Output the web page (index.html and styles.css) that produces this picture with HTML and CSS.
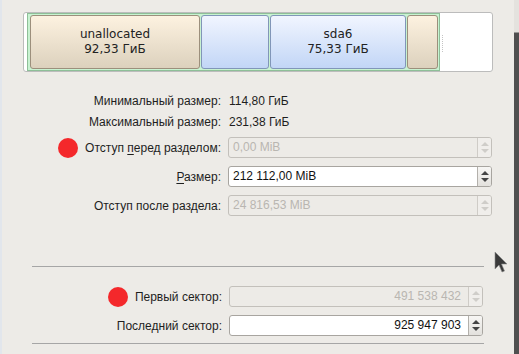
FILE: index.html
```html
<!DOCTYPE html>
<html lang="ru">

<head>
  <meta charset="UTF-8">
  <title>Изменить размер раздела</title>
  <link rel="stylesheet" href="styles.css">
</head>

<body>
  <div class="screen">
    <main class="dialog">
      <div class="disk">
        <div class="disk-used">
          <div class="part part-free part-big"><span>unallocated</span><span>92,33 ГиБ</span></div>
          <div class="part part-fs part-mid"></div>
          <div class="part part-fs part-sda6"><span>sda6</span><span>75,33 ГиБ</span></div>
          <div class="part part-free part-tail"></div>
        </div>
        <div class="disk-rest"><span class="disk-mark"></span></div>
      </div>

      <div class="info">
        <div class="label">Минимальный размер:</div>
        <div class="value">114,80 ГиБ</div>
        <div class="label">Максимальный размер:</div>
        <div class="value">231,38 ГиБ</div>
      </div>

      <div class="fields">
        <div class="label"><span class="dot"></span><span>Отступ <u>п</u>еред разделом:</span></div>
        <div class="spin disabled"><span class="spin-text">0,00 MiB</span><span class="spin-btn"><i class="up"></i><i class="down"></i></span></div>
        <div class="label"><span><u>Р</u>азмер:</span></div>
        <div class="spin"><span class="spin-text">212 112,00 MiB</span><span class="spin-btn"><i class="up"></i><i class="down"></i></span></div>
        <div class="label"><span>Отступ после раздела:</span></div>
        <div class="spin disabled"><span class="spin-text">24 816,53 MiB</span><span class="spin-btn"><i class="up"></i><i class="down"></i></span></div>
      </div>

      <hr class="sep sep-top">

      <div class="fields sectors">
        <div class="label"><span class="dot"></span><span>Первый сектор:</span></div>
        <div class="spin disabled"><span class="spin-text num">491 538 432</span><span class="spin-btn"><i class="up"></i><i class="down"></i></span></div>
        <div class="label"><span>Последний сектор:</span></div>
        <div class="spin"><span class="spin-text num">925 947 903</span><span class="spin-btn"><i class="up"></i><i class="down"></i></span></div>
      </div>

      <hr class="sep sep-bottom">
    </main>
    <div class="edge"></div>
  </div>

  <!-- mouse pointer caught in the shot -->
  <svg class="cursor" width="14" height="22" viewBox="0 0 14 22">
    <path d="M1 1 L1 18 L5 14 L8 21 L10.5 20 L7.5 13 L13 13 Z" fill="#3a3a3a" stroke="#8a8a8a" stroke-width="0.6" />
  </svg>
</body>

</html>
```

FILE: styles.css
```css
body {
  margin: 0;
  background: #edebe7;
  color: #1e1e1e;
  font-family: 'Liberation Sans', Arial, sans-serif;
  font-size: 12px;
}

.screen {
  display: flex;
  width: 519px;
  height: 354px;
  overflow: hidden;
}

.dialog {
  width: 512px;
  border-left: 2px solid #e2e6ec;
  padding-top: 12px;
}

.edge {
  width: 5px;
  background: linear-gradient(to bottom, #e4e2de 0, #e4e2de 32px, #4f4f4f 33px);
}

/* partition map */

.disk {
  display: flex;
  margin-left: 21px;
  width: 465px;
  height: 58px;
  padding-left: 3px;
  border: 1px solid #bcbcbc;
  border-radius: 3px;
  background: #fff;
}

.disk-used {
  display: flex;
  gap: 1px;
  width: 408px;
  height: 54px;
  padding: 1px 1px 1px 2px;
  border: 1px solid #8ebf98;
  background: #c8f2d1;
}

.part {
  flex: none;
  box-sizing: border-box;
  height: 54px;
  border-radius: 3px;
  display: flex;
  flex-direction: column;
  align-items: center;
  justify-content: center;
  font-family: 'DejaVu Sans', sans-serif;
  font-size: 12px;
  line-height: 15px;
  color: #222;
}

.part-free {
  border: 1px solid #9c8f7c;
  background: linear-gradient(to bottom, #fdf2e0, #dcd1bd);
}

.part-fs {
  border: 1px solid #8196b8;
  background: linear-gradient(to bottom, #f1f5ff, #c2d6f6);
}

.part-big {
  width: 170px;
}

.part-mid {
  width: 68px;
}

.part-sda6 {
  width: 136px;
}

.part-tail {
  width: 31px;
}

.disk-rest {
  flex: 1;
  padding-left: 2px;
  padding-top: 22px;
}

.disk-mark {
  display: block;
  height: 17px;
  border-left: 1px dotted #c4c4c4;
}

/* form rows */

.info,
.fields {
  display: grid;
  grid-template-columns: 219px 264px;
  column-gap: 7px;
}

.info {
  margin-top: 19px;
  line-height: 21px;
}

.info .value {
  padding-left: 1px;
}

.fields {
  margin-top: 4px;
  row-gap: 8px;
}

.label {
  display: flex;
  align-items: center;
  justify-content: flex-end;
  gap: 7px;
  white-space: nowrap;
}

.label u {
  text-underline-offset: 2px;
}

.dot {
  width: 20px;
  height: 20px;
  border-radius: 50%;
  background: #f4282b;
}

.spin {
  display: flex;
  height: 21px;
  box-sizing: border-box;
  border: 1px solid #a8a5a0;
  border-radius: 3px;
  background: #fff;
  color: #111;
}

.spin-text {
  flex: 1;
  padding-left: 4px;
  line-height: 19px;
}

.spin-text.num {
  text-align: right;
  padding-right: 7px;
}

.spin-btn {
  width: 13px;
  display: flex;
  flex-direction: column;
  align-items: center;
  justify-content: center;
  gap: 3px;
  border-left: 1px solid #b3b0ab;
  border-radius: 0 2px 2px 0;
  background: linear-gradient(to bottom, #f7f6f4, #e3e1dd);
}

.spin-btn i {
  width: 0;
  height: 0;
  border-left: 4px solid transparent;
  border-right: 4px solid transparent;
}

.spin-btn .up {
  border-bottom: 4px solid #444;
}

.spin-btn .down {
  border-top: 4px solid #444;
}

.spin.disabled {
  background: #edebe7;
  border-color: #c3c0bb;
  color: #b9b6b1;
}

.spin.disabled .spin-btn {
  border-left-color: #cfccc7;
  background: #f0eeeb;
}

.spin.disabled .spin-btn .up {
  border-bottom-color: #cfcdc9;
}

.spin.disabled .spin-btn .down {
  border-top-color: #cfcdc9;
}

.sep {
  width: 452px;
  margin: 0 0 0 30px;
  border: 0;
  border-top: 1px solid #a6a6a6;
}

.sep-top {
  margin-top: 50px;
}

.sectors {
  grid-template-columns: 220px 254px;
  margin-top: 19px;
}

.sep-bottom {
  margin-top: 7px;
}

.cursor {
  position: absolute;
  left: 494px;
  top: 251px;
}
```
